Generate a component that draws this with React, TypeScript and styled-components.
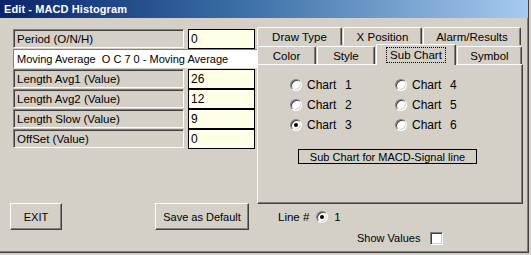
import { FC } from "react";
import styled, { createGlobalStyle } from "styled-components";

const GlobalStyle = createGlobalStyle`
  html, body {
    margin: 0;
    padding: 0;
    background: #d4d0c8;
  }
  body {
    font-family: "Liberation Sans", Arial, sans-serif;
    font-size: 11px;
    color: #000;
  }
`;

const Frame = styled.div`
  width: 531px;
  height: 255px;
  background: #d4d0c8;
  overflow: hidden;
`;

const Window = styled.div`
  width: 529px;
  height: 253px;
  box-sizing: border-box;
  border-right: 1px solid #404040;
  border-bottom: 1px solid #404040;
  box-shadow: inset -1px -1px 0 #808080;
  display: flex;
  flex-direction: column;
`;

const TitleBar = styled.div`
  height: 18px;
  display: flex;
  align-items: center;
  padding-left: 4px;
  background: linear-gradient(90deg, #0a246a 0%, #3a6ea5 45%, #a6caf0 100%);
  color: #fff;
  font-weight: bold;
  font-size: 11px;
  letter-spacing: 0.1px;
`;

const Body = styled.div`
  display: flex;
  padding-top: 9px;
`;

const LeftColumn = styled.div`
  width: 247px;
  padding-left: 10px;
  padding-top: 2px;
  display: flex;
  flex-direction: column;
`;

const Form = styled.div`
  margin-left: 3px;
  display: flex;
  flex-direction: column;
`;

const FieldRow = styled.div`
  display: flex;
  height: 20px;
  align-items: flex-start;
`;

const Label = styled.div`
  width: 171px;
  height: 19px;
  box-sizing: border-box;
  border-style: solid;
  border-width: 1px;
  border-color: #808080 #fff #fff #808080;
  box-shadow: inset 1px 1px 0 #404040;
  padding-left: 3px;
  display: flex;
  align-items: center;
  font-size: 11.5px;
  white-space: pre;
`;

const Value = styled.div`
  width: 67px;
  height: 20px;
  margin-left: 4px;
  box-sizing: border-box;
  border: 1px solid #000;
  background: #ffffe8;
  padding-left: 2px;
  display: flex;
  align-items: center;
  font-size: 12px;
`;

const InfoRow = styled.div`
  width: 244px;
  height: 19px;
  margin-bottom: 1px;
  box-sizing: border-box;
  background: #fff;
  border-top: 1px solid #808080;
  border-left: 1px solid #808080;
  padding-left: 3px;
  display: flex;
  align-items: center;
  font-size: 11px;
  white-space: pre;
`;

const ButtonRow = styled.div`
  display: flex;
  gap: 93px;
  margin-top: 54px;
`;

const Button = styled.button<{ $w: number }>`
  width: ${(p) => p.$w}px;
  height: 27px;
  box-sizing: border-box;
  background: #d4d0c8;
  border: 1px solid;
  border-color: #fff #404040 #404040 #fff;
  box-shadow: inset -1px -1px 0 #808080;
  font-family: "Liberation Sans", Arial, sans-serif;
  font-size: 11px;
  color: #000;
  padding: 0;
`;

const RightColumn = styled.div`
  width: 266px;
  display: flex;
  flex-direction: column;
`;

const TabRow = styled.div<{ $front?: boolean }>`
  display: flex;
  height: ${(p) => (p.$front ? 19 : 18)}px;
  align-items: flex-end;
  position: relative;
  z-index: ${(p) => (p.$front ? 2 : 1)};
`;

const Tab = styled.div<{ $w: number; $active?: boolean }>`
  width: ${(p) => p.$w}px;
  height: ${(p) => (p.$active ? 21 : 18)}px;
  margin-bottom: ${(p) => (p.$active ? -1 : 0)}px;
  margin-right: 1px;
  box-sizing: border-box;
  background: #d4d0c8;
  border-top: 1px solid #fff;
  border-left: 1px solid #fff;
  border-right: 1px solid #404040;
  box-shadow: inset -1px 0 0 #808080;
  border-radius: 2px 2px 0 0;
  display: flex;
  align-items: ${(p) => (p.$active ? "flex-start" : "center")};
  padding-top: ${(p) => (p.$active ? 2 : 0)}px;
  justify-content: center;
  font-size: 11.5px;
`;

const FocusText = styled.span`
  border: 1px dotted #000;
  padding: 0 3px;
  line-height: 14px;
`;

const Panel = styled.div`
  height: 140px;
  box-sizing: border-box;
  border-top: 1px solid #fff;
  border-left: 1px solid #fff;
  border-right: 1px solid #404040;
  border-bottom: 1px solid #404040;
  box-shadow: inset -1px -1px 0 #808080;
  padding: 10px 0 0 32px;
`;

const RadioGrid = styled.div`
  display: grid;
  grid-template-columns: 105px 100px;
  grid-auto-rows: 20px;
`;

const RadioItem = styled.div`
  display: flex;
  align-items: center;
  gap: 5px;
  font-size: 12px;
  word-spacing: 1px;
  white-space: pre;
`;

const RadioCircle = styled.span<{ $checked?: boolean }>`
  position: relative;
  display: inline-block;
  width: 12px;
  height: 12px;
  box-sizing: border-box;
  border-radius: 50%;
  border: 1px solid;
  border-color: #808080 #fff #fff #808080;
  background: #fff;
  box-shadow: inset 1px 1px 0 #404040, inset -1px -1px 0 #d4d0c8;
  flex: none;

  &::after {
    content: "";
    display: ${(p) => (p.$checked ? "block" : "none")};
    position: absolute;
    left: 3px;
    top: 3px;
    width: 4px;
    height: 4px;
    border-radius: 50%;
    background: #000;
  }
`;

const LineRadio = styled(RadioCircle)`
  margin: 0 6px 0 7px;
`;

const CaptionBox = styled.div`
  width: 179px;
  height: 15px;
  margin: 14px 0 0 8px;
  box-sizing: border-box;
  border: 1px solid #000;
  display: flex;
  align-items: center;
  justify-content: center;
  font-size: 11px;
`;

const LineRow = styled.div`
  display: flex;
  align-items: center;
  height: 14px;
  margin-top: 6px;
  padding-left: 21px;
  font-size: 11.5px;
`;

const ShowRow = styled.div`
  display: flex;
  align-items: center;
  height: 14px;
  margin-top: 7px;
  padding-left: 100px;
  font-size: 11px;
`;

const CheckBox = styled.span`
  width: 13px;
  height: 13px;
  margin-left: 10px;
  box-sizing: border-box;
  background: #fff;
  border: 1px solid;
  border-color: #808080 #fff #fff #808080;
  box-shadow: inset 1px 1px 0 #404040, inset -1px -1px 0 #d4d0c8;
`;

const fields = [
  { label: "Length Avg1 (Value)", value: "26" },
  { label: "Length Avg2 (Value)", value: "12" },
  { label: "Length Slow (Value)", value: "9" },
  { label: "OffSet (Value)", value: "0" },
];

const charts = [
  { n: 1, checked: false },
  { n: 4, checked: false },
  { n: 2, checked: false },
  { n: 5, checked: false },
  { n: 3, checked: true },
  { n: 6, checked: false },
];

const App: FC = () => (
  <Frame>
    <GlobalStyle />
    <Window>
      <TitleBar>Edit - MACD Histogram</TitleBar>
      <Body>
        <LeftColumn>
          <Form>
            <FieldRow>
              <Label>Period (O/N/H)</Label>
              <Value>0</Value>
            </FieldRow>
            <InfoRow>Moving Average  O C 7 0 - Moving Average</InfoRow>
            {fields.map((f) => (
              <FieldRow key={f.label}>
                <Label>{f.label}</Label>
                <Value>{f.value}</Value>
              </FieldRow>
            ))}
          </Form>
          <ButtonRow>
            <Button $w={52}>EXIT</Button>
            <Button $w={94}>Save as Default</Button>
          </ButtonRow>
        </LeftColumn>
        <RightColumn>
          <TabRow>
            <Tab $w={85}>Draw Type</Tab>
            <Tab $w={79}>X Position</Tab>
            <Tab $w={98}>Alarm/Results</Tab>
          </TabRow>
          <TabRow $front>
            <Tab $w={59}>Color</Tab>
            <Tab $w={58}>Style</Tab>
            <Tab $w={80} $active>
              <FocusText>Sub Chart</FocusText>
            </Tab>
            <Tab $w={65}>Symbol</Tab>
          </TabRow>
          <Panel>
            <RadioGrid>
              {charts.map((c) => (
                <RadioItem key={c.n}>
                  <RadioCircle $checked={c.checked} />
                  {`Chart  ${c.n}`}
                </RadioItem>
              ))}
            </RadioGrid>
            <CaptionBox>Sub Chart for MACD-Signal line</CaptionBox>
          </Panel>
          <LineRow>
            Line #
            <LineRadio $checked />1
          </LineRow>
          <ShowRow>
            Show Values
            <CheckBox />
          </ShowRow>
        </RightColumn>
      </Body>
    </Window>
  </Frame>
);

export default App;
